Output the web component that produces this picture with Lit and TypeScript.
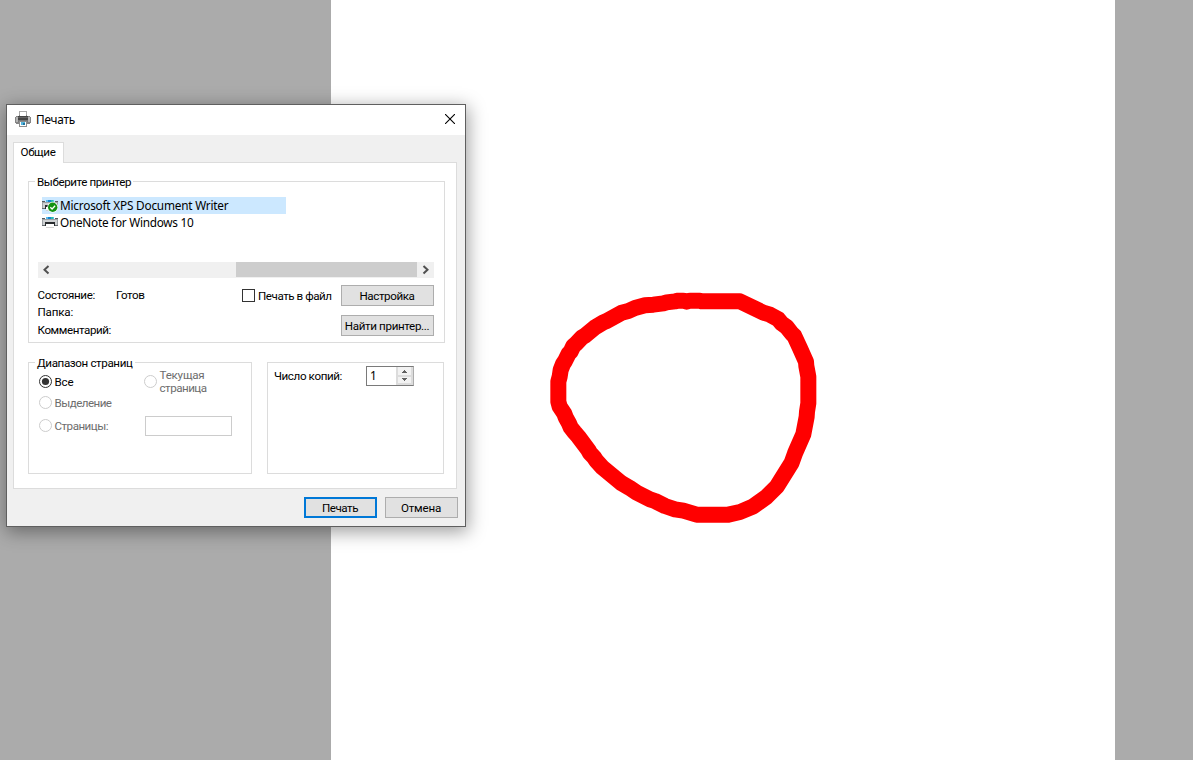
import { LitElement, html, css, svg } from "lit";
import { customElement, property } from "lit/decorators.js";

/** A run of label text tracked to a given width. */
@customElement("fit-text")
class FitText extends LitElement {
  @property({ type: Number }) w = 0;
  @property() text = "";
  static styles = css`
    :host { display: block; white-space: nowrap; }
    span { display: inline-block; }
  `;
  render() {
    return html`<span>${this.text}</span>`;
  }
  firstUpdated() {
    const span = this.renderRoot.querySelector("span") as HTMLElement;
    const natural = span.getBoundingClientRect().width;
    if (this.w) span.style.letterSpacing = `${(this.w - natural) / this.text.length}px`;
  }
}

const t = (text: string, w: number, cls = "") =>
  html`<fit-text class=${cls} .text=${text} .w=${w}></fit-text>`;

const printerLarge = html`<svg class="ico" width="16" height="16" viewBox="0 0 16 16" shape-rendering="crispEdges">
  <path fill="#a9a9a9" d="M4 0h8v6H4z"/><path fill="#fff" d="M5 1h6v4H5z"/>
  <path fill="#858585" d="M1 5h3v-1h8v1h3v1h1v6h-1v1H1v-1H0V6h1z"/>
  <path fill="#b5b5b5" d="M1 6h2v5H1zM13 6h2v5h-2z"/>
  <path fill="#fff" d="M5 3h6v2H5z"/>
  <path fill="#444" d="M3 5h10v4H3z"/><path fill="#626262" d="M3 6h10v1H3z"/>
  <path fill="#777" d="M3 9h10v2H3z"/>
  <path fill="#8d8d8d" d="M4 10h8v6H4z"/><path fill="#fff" d="M5 11h6v4H5z"/>
  <path fill="#55b7df" d="M6 11h4v3H6z"/><path fill="#2375a0" d="M8 12h2v2H8z"/>
</svg>`;

const printerSmall = (checked: boolean) => html`<svg class="ico" width="16" height="17" viewBox="0 0 16 17">
  <g shape-rendering="crispEdges">
    <path fill="#555b60" d="M0 4h3v1H0zM13 4h3v1h-3z"/>
    <path fill="#9da2a6" d="M0 5h16v7H0z"/><path fill="#cfd2d4" d="M1 6h14v5H1z"/>
    <path fill="#666c70" d="M0 11h3v1H0zM13 11h3v1h-3z"/>
    <path fill="#5bbdec" d="M4 3h8v2H4z"/><path fill="#1684d1" d="M6 3h3v2H6z"/><path fill="#2bbfa8" d="M9 3h2v2H9z"/>
    <path fill="#292d30" d="M3 8h10v2H3zM3 10h1v2H3zM12 10h1v2h-1z"/><path fill="#fff" d="M4 10h8v4H4z"/>
    <path fill="#d3d3d3" d="M4 13h8v1H4z"/>
  </g>
  ${checked
    ? svg`<circle cx="10.7" cy="10.2" r="5.4" fill="#fff"/><circle cx="10.7" cy="10.2" r="4.7" fill="#129212"/><path d="M8.3 10.2l1.8 1.8 3-3.2" fill="none" stroke="#fff" stroke-width="1.3"/>`
    : ""}
</svg>`;

const radio = (on: boolean) => html`<svg class="ico" width="13" height="13" viewBox="0 0 13 13">
  <circle cx="6.5" cy="6.5" r="6" fill="#fff" stroke=${on ? "#333" : "#ccc"}/>
  ${on ? svg`<circle cx="6.5" cy="6.5" r="3.6" fill="#333"/>` : ""}
</svg>`;

const arrow = (d: string) => html`<svg class="ico" width="17" height="16" viewBox="0 0 17 16">
  <path d=${d} fill="none" stroke="#505050" stroke-width="2"/>
</svg>`;

@customElement("app-root")
class AppRoot extends LitElement {
  static styles = css`
    :host {
      display: block; position: relative; width: 1193px; height: 760px; overflow: hidden;
      background: #ababab; font: 11.6px/14px Roboto, sans-serif; color: #000;
    }
    * { box-sizing: border-box; }
    .ico { display: block; flex: none; }
    .sheet { width: 784px; height: 760px; margin-left: 331px; background: #fff; }
    .sheet svg { display: block; }
    .dialog {
      position: absolute; left: 6px; top: 104px; width: 460px; height: 423px;
      border: 1px solid #5f5f5f; background: #f0f0f0;
      box-shadow: 1px 4px 17px 1px rgba(0, 0, 0, 0.38);
    }
    .title { display: flex; align-items: center; height: 30px; padding: 0 10px 2px 8px; background: #fff; }
    .title fit-text { margin-left: 5px; flex: 1; }
    .segoe { font-family: "Noto Sans", sans-serif; font-size: 11.8px; }
    .tab {
      width: 51px; height: 21px; margin: 7px 0 -1px 6px; padding: 2px 0 0 6.5px; position: relative; z-index: 1;
      background: #fff; border: 1px solid #dcdcdc; border-bottom: 0;
    }
    .panel { width: 444px; height: 327px; margin-left: 6px; padding: 18px 0 0 14px; background: #fff; border: 1px solid #dcdcdc; }
    .group { border: 1px solid #dcdcdc; }
    .legend { width: fit-content; height: 15px; margin: -7px 0 0 6px; padding: 0 2px; background: #fff; }
    .printers { width: 417px; height: 162px; }
    .list { height: 65px; margin: 7px 0 0 13px; }
    .item { display: flex; align-items: flex-start; width: 244px; height: 17px; }
    .item fit-text { margin: 1px 0 0 2px; }
    .sel { background: #cce8ff; }
    .scroll { display: flex; width: 396px; height: 16px; margin-left: 9px; background: #f0f0f0; }
    .thumb { width: 181px; height: 15px; margin-left: 181px; background: #cdcdcd; }
    .info { display: flex; margin-left: 8.5px; }
    .keys { width: 78.5px; padding-top: 9.5px; }
    .keys fit-text { height: 17.5px; }
    .state { width: 126px; padding-top: 9.5px; }
    .check { display: flex; width: 99px; padding-top: 11px; }
    .box { width: 13px; height: 13px; border: 1px solid #333; background: #fff; }
    .check fit-text { margin-left: 3px; }
    .stack { display: flex; flex-direction: column; gap: 9px; padding-top: 7px; }
    .btn { display: flex; justify-content: center; align-items: center; width: 93px; height: 21px; background: #e1e1e1; border: 1px solid #adadad; }
    .btn fit-text { padding: 1px 1px 0 0; }
    .pair { display: flex; gap: 15px; margin-top: 19px; }
    .range { width: 224px; height: 112px; }
    .cols { display: flex; margin-left: 10px; }
    .radios { width: 105px; padding-top: 4px; }
    .opt { display: flex; gap: 2.5px; height: 13px; }
    .opt fit-text { margin-top: -0.4px; }
    .opt + .opt { margin-top: 8px; }
    .opt + .opt + .opt { margin-top: 10px; }
    .dim { color: #6d6d6d; }
    .cur { display: flex; align-items: flex-start; gap: 2.5px; line-height: 13px; margin-top: -2px; height: 26px; }
    .cur .ico { margin-top: 6px; }
    .edit { width: 87px; height: 20px; margin: 21px 0 0 0; border: 1px solid #ccc; background: #fff; }
    .right { width: 100px; }
    .right .edit { margin-left: 1px; }
    .copies { display: flex; width: 177px; height: 112px; padding: 3px 0 0 6px; }
    .copies .lab { width: 92px; padding-top: 3px; }
    .spin { display: flex; width: 48px; height: 20px; border: 1px solid #7a7a7a; border-right-color: #adadad; }
    .num { width: 29px; padding: 1px 0 0 3px; }
    .foot { display: flex; justify-content: flex-end; gap: 8px; margin: 8px 7px 0 0; }
    .foot .btn { width: 73px; }
    .foot .main { border: 2px solid #0078d7; }
  `;

  render() {
    return html`
      <div class="sheet">
        <svg width="784" height="760" viewBox="331 0 784 760">
          <path transform="translate(540 280) scale(.333333)" fill="none" stroke="#f00" stroke-width="48" stroke-linejoin="round"
            d="M55 305V365L59 380 73 401 77 412 87 430 92 442 103 456 115 470 145 510 150 519 163 533 168 541 187 562 245 610 268 623 290 638 330 658 345 663 375 678 405 688 430 692 470 704H565L600 696 640 679 680 650 711 619 755 548 765 520 790 463 800 410 801 395 805 370V290L799 258 798 245 780 205 763 168 755 160 740 141 725 130 715 118 690 104 670 98 600 64H485L480 62H450L440 65 430 62H415L405 64 380 67 370 70 340 74 315 76 285 84 265 93 245 98 200 123 190 127 165 142 135 167 125 173 108 191 100 198 92 215 86 221 75 243 69 252 62 270 59 290Z"/>
        </svg>
      </div>
      <div class="dialog">
        <div class="title">
          ${printerLarge} ${t("Печать", 39, "segoe")}
          <svg class="ico" width="10" height="10" viewBox="0 0 10 10"><path d="M0 0L10 10M10 0L0 10" stroke="#000" stroke-width="1.1"/></svg>
        </div>
        <div class="tab">${t("Общие", 35)}</div>
        <div class="panel">
          <div class="group printers">
            <div class="legend">${t("Выберите принтер", 94)}</div>
            <div class="list">
              <div class="item sel">${printerSmall(true)}${t("Microsoft XPS Document Writer", 168.5, "segoe")}</div>
              <div class="item">${printerSmall(false)}${t("OneNote for Windows 10", 133.5, "segoe")}</div>
            </div>
            <div class="scroll">
              ${arrow("M10.5 4L6.5 7.7 10.5 11.4")}
              <div class="thumb"></div>
              ${arrow("M6.5 4L10.5 7.7 6.5 11.4")}
            </div>
            <div class="info">
              <div class="keys">${t("Состояние:", 57.5)}${t("Папка:", 35.5)}${t("Комментарий:", 73.5)}</div>
              <div class="state">${t("Готов", 28.5)}</div>
              <div class="check"><div class="box"></div>${t("Печать в файл", 73.5)}</div>
              <div class="stack">
                <div class="btn">${t("Настройка", 55)}</div>
                <div class="btn">${t("Найти принтер...", 84.5)}</div>
              </div>
            </div>
          </div>
          <div class="pair">
            <div class="group range">
              <div class="legend">${t("Диапазон страниц", 95.5)}</div>
              <div class="cols">
                <div class="radios">
                  <div class="opt">${radio(true)}${t("Все", 19)}</div>
                  <div class="opt dim">${radio(false)}${t("Выделение", 57)}</div>
                  <div class="opt dim">${radio(false)}${t("Страницы:", 53.5)}</div>
                </div>
                <div class="right">
                  <div class="cur dim">${radio(false)}<div>${t("Текущая", 45)}${t("страница", 47)}</div></div>
                  <div class="edit"></div>
                </div>
              </div>
            </div>
            <div class="group copies">
              <div class="lab">${t("Число копий:", 68)}</div>
              <div class="spin">
                <div class="num segoe">1</div>
                <svg class="ico" width="17" height="18" viewBox="0 0 17 18" shape-rendering="crispEdges">
                  <path fill="#dcdcdc" d="M0 0h17v18H0z"/><path fill="#f2f2f2" d="M2 0h13v8H2zM2 10h13v6H2z"/>
                  <path fill="#606060" d="M8 3h1v1h1v1h1v1H6V5h1V4h1zM6 11h5v1h-1v1H9v1H8v-1H7v-1H6z"/>
                </svg>
              </div>
            </div>
          </div>
        </div>
        <div class="foot">
          <div class="btn main">${t("Печать", 36)}</div>
          <div class="btn">${t("Отмена", 40)}</div>
        </div>
      </div>
    `;
  }
}
